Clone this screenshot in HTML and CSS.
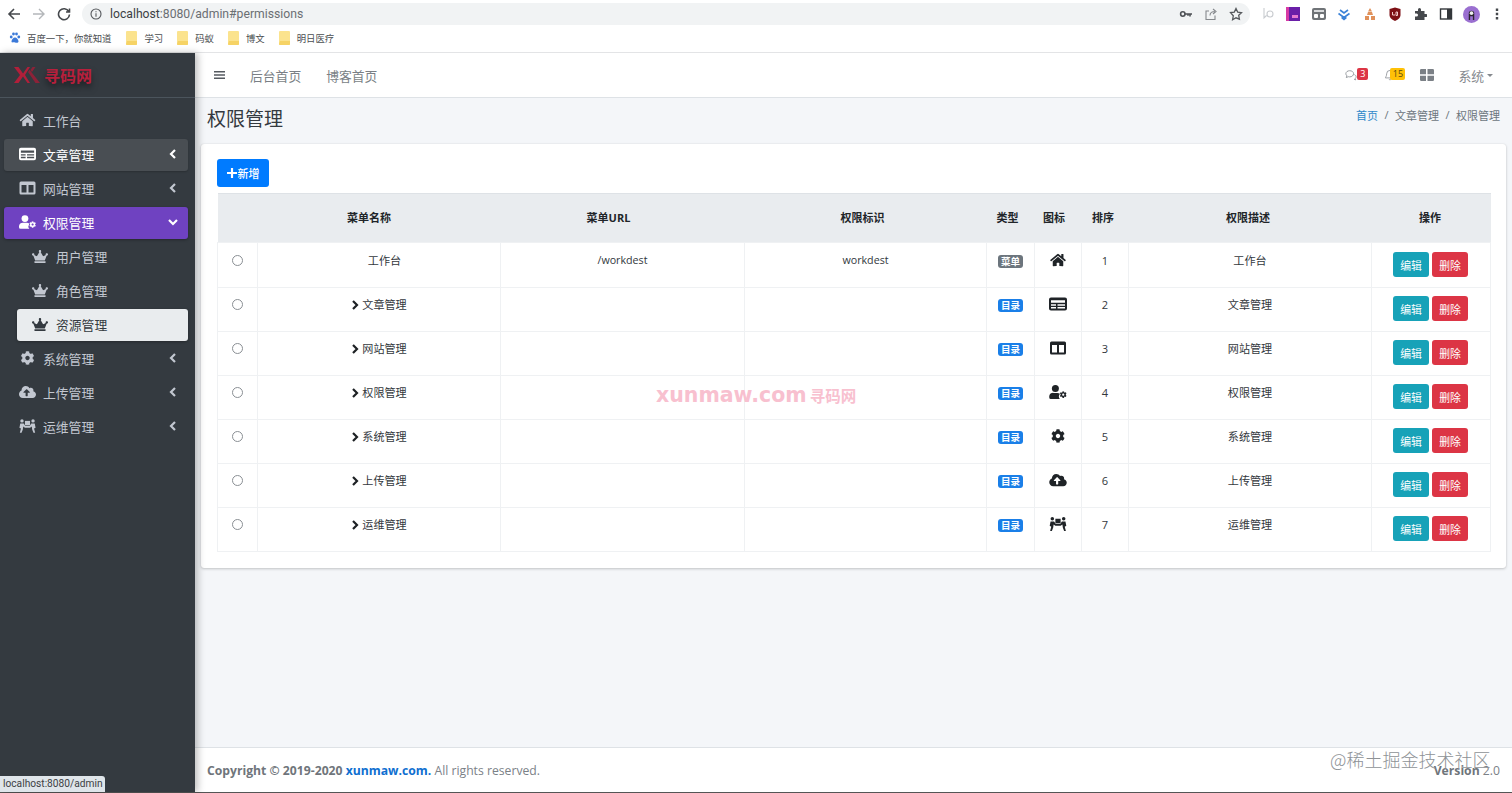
FILE: index.html
```html
<!DOCTYPE html>
<html lang="zh-CN">
<head>
<meta charset="utf-8">
<title>权限管理</title>
<link rel="stylesheet" href="styles.css">
</head>
<body>
<svg class="defs" aria-hidden="true">
  <symbol id="i-home" viewBox="0 0 576 512"><path d="M280.37 148.26L96 300.11V464a16 16 0 0 0 16 16l112.06-.29a16 16 0 0 0 15.92-16V368a16 16 0 0 1 16-16h64a16 16 0 0 1 16 16v95.64a16 16 0 0 0 16 16.05L464 480a16 16 0 0 0 16-16V300L295.67 148.26a12.19 12.19 0 0 0-15.3 0zM571.6 251.47L488 182.56V44.05a12 12 0 0 0-12-12h-56a12 12 0 0 0-12 12v72.61L318.47 43a48 48 0 0 0-61 0L4.34 251.47a12 12 0 0 0-1.6 16.9l25.5 31A12 12 0 0 0 45.15 301l235.22-193.74a12.19 12.19 0 0 1 15.3 0L530.9 301a12 12 0 0 0 16.9-1.6l25.5-31a12 12 0 0 0-1.7-16.93z"/></symbol>
  <symbol id="i-cog" viewBox="0 0 512 512"><path d="M487.4 315.7l-42.6-24.6c4.3-23.2 4.3-47 0-70.2l42.6-24.6c4.9-2.8 7.1-8.6 5.5-14-11.1-35.6-30-67.8-54.7-94.6-3.8-4.1-10-5.1-14.8-2.3L380.8 110c-17.9-15.4-38.5-27.3-60.8-35.1V25.8c0-5.6-3.9-10.5-9.4-11.7-36.7-8.2-74.3-7.8-109.2 0-5.5 1.2-9.4 6.1-9.4 11.7V75c-22.2 7.9-42.8 19.8-60.8 35.1L88.7 85.5c-4.9-2.8-11-1.9-14.8 2.3-24.7 26.7-43.6 58.9-54.7 94.6-1.7 5.4.6 11.2 5.5 14L67.3 221c-4.3 23.2-4.3 47 0 70.2l-42.6 24.6c-4.9 2.8-7.1 8.6-5.5 14 11.1 35.6 30 67.8 54.7 94.6 3.8 4.1 10 5.1 14.8 2.3l42.6-24.6c17.9 15.4 38.5 27.3 60.8 35.1v49.2c0 5.6 3.9 10.5 9.4 11.7 36.7 8.2 74.3 7.8 109.2 0 5.5-1.2 9.4-6.1 9.4-11.7v-49.2c22.2-7.9 42.8-19.8 60.8-35.1l42.6 24.6c4.9 2.8 11 1.9 14.8-2.3 24.7-26.7 43.6-58.9 54.7-94.6 1.5-5.5-.7-11.3-5.6-14.1zM256 336c-44.1 0-80-35.9-80-80s35.9-80 80-80 80 35.9 80 80-35.9 80-80 80z"/></symbol>
  <symbol id="i-crown" viewBox="0 0 640 512"><path d="M528 448H112c-8.8 0-16 7.2-16 16v32c0 8.8 7.2 16 16 16h416c8.8 0 16-7.2 16-16v-32c0-8.8-7.2-16-16-16zm64-320c-26.5 0-48 21.5-48 48 0 7.1 1.6 13.7 4.4 19.8L476 239.2c-15.4 9.2-35.3 4-44.2-11.6L350.3 85C361 76.2 368 63 368 48c0-26.5-21.5-48-48-48s-48 21.5-48 48c0 15 7 28.2 17.7 37l-81.5 142.6c-8.9 15.6-28.9 20.8-44.2 11.6l-72.3-43.4c2.7-6 4.4-12.7 4.4-19.8 0-26.5-21.5-48-48-48S0 149.5 0 176s21.5 48 48 48c2.6 0 5.2-.4 7.7-.8L128 416h384l72.3-192.8c2.5.4 5.1.8 7.7.8 26.5 0 48-21.5 48-48s-21.5-48-48-48z"/></symbol>
  <symbol id="i-cloud" viewBox="0 0 640 512"><path d="M537.6 226.6c4.1-10.7 6.4-22.4 6.4-34.6 0-53-43-96-96-96-19.7 0-38.1 6-53.3 16.2C367 64.2 315.3 32 256 32c-88.4 0-160 71.6-160 160 0 2.7.1 5.4.2 8.1C40.2 219.8 0 273.2 0 336c0 79.5 64.5 144 144 144h368c70.7 0 128-57.3 128-128 0-61.9-44-113.6-102.4-125.4zM393.4 288H328v112c0 8.8-7.2 16-16 16h-48c-8.8 0-16-7.2-16-16V288h-65.4c-14.3 0-21.4-17.2-11.3-27.3l105.4-105.4c6.2-6.2 16.4-6.2 22.6 0l105.4 105.4c10.1 10.1 3 27.3-11.3 27.3z"/></symbol>
  <symbol id="i-article" viewBox="0 0 18 14"><path fill-rule="evenodd" d="M2 0.5h14a2 2 0 0 1 2 2v9a2 2 0 0 1-2 2H2a2 2 0 0 1-2-2v-9a2 2 0 0 1 2-2zM2 3.2v2.600h14V3.200zM2 7.300v1.400h5V7.300zM8.500 7.300v1.400H16V7.300zM2 10v1.500h5V10zM8.500 10v1.500H16V10z"/></symbol>
  <symbol id="i-columns" viewBox="0 0 16 14"><path fill-rule="evenodd" d="M1.500 0.500h13A1.500 1.500 0 0 1 16 2v10a1.500 1.500 0 0 1-1.500 1.500h-13A1.500 1.500 0 0 1 0 12V2A1.500 1.500 0 0 1 1.500 0.500zM2 4v7.500h5V4zM9 4v7.500h5V4z"/></symbol>
  <symbol id="i-usercog" viewBox="0 0 20 16"><circle cx="7" cy="4" r="4"/><path d="M0 14.200v-1.500A4.700 4.700 0 0 1 4.700 9h4.600c1 0 1.900.3 2.600.8v.7a4.500 4.500 0 0 0 .3 5.500H1.800A1.800 1.800 0 0 1 0 14.200z"/><use href="#i-cog" x="12" y="7" width="8" height="8"/></symbol>
  <symbol id="i-people" viewBox="0 0 20 16"><circle cx="3.500" cy="2" r="2"/><circle cx="16.500" cy="2" r="2"/><rect x="7" y="2" width="6" height="5"/><path d="M1.500 5h4L7.300 7.600h5.400L14.500 5h4l1 5-1.800 1 1.300 5h-2l-1.500-4-.5-3.500-2 1.500H7l-2-1.500-.5 3.500L3 16H1l1.300-5L.5 10z"/></symbol>
  <symbol id="i-list" viewBox="0 0 14 12"><path d="M0 1h14v1.800H0zM0 5.100h14v1.800H0zM0 9.200h14V11H0z"/></symbol>
  <symbol id="i-th" viewBox="0 0 14 12"><path d="M0 1.200A1.200 1.200 0 0 1 1.200 0H6v5.300H0zM7.500 0h5.300A1.200 1.200 0 0 1 14 1.200v4.100H7.500zM0 6.700h6V12H1.200A1.200 1.200 0 0 1 0 10.800zM7.500 6.700H14v4.100a1.200 1.200 0 0 1-1.200 1.200H7.500z"/></symbol>
  <symbol id="i-plus" viewBox="0 0 12 12"><path d="M4.700 0h2.600v4.700H12v2.600H7.300V12H4.700V7.300H0V4.700h4.700z"/></symbol>
  <symbol id="i-folder" viewBox="0 0 11 14"><path d="M1 0h9a1 1 0 0 1 1 1v12a1 1 0 0 1-1 1H1a1 1 0 0 1-1-1V1a1 1 0 0 1 1-1z" fill="#fbe38e"/><path d="M1 10h10v3a1 1 0 0 1-1 1H1a1 1 0 0 1-1-1z" fill="#f6d365"/></symbol>
</svg>

<header class="browser">
  <div class="toolbar">
    <div class="nav-btns">
      <svg class="tb-icon" viewBox="0 0 14 14"><path class="st-dark" d="M13 7H2M7 2L2 7l5 5"/></svg>
      <svg class="tb-icon" viewBox="0 0 14 14"><path class="st-light" d="M1 7h11M7 2l5 5-5 5"/></svg>
      <svg class="tb-icon" viewBox="0 0 14 14"><path class="st-dark" d="M11.800 4.500A5.500 5.500 0 1 0 12.500 7.500M12.500 1.500v3.500H9"/></svg>
    </div>
    <div class="address">
      <svg class="info" viewBox="0 0 12 12"><circle class="st-thin" cx="6" cy="6" r="5"/><path class="st-thin" d="M6 5.300v3.500M6 3.200v1"/></svg>
      <span class="url"><span class="host">localhost</span>:8080/admin#permissions</span>
      <div class="addr-actions">
        <svg class="tb-icon" viewBox="0 0 14 14"><circle class="st-key" cx="3.800" cy="7" r="2.200"/><path class="st-key" d="M6 7h7M11 7v2.500M9 7v1.800"/></svg>
        <svg class="tb-icon" viewBox="0 0 14 14"><path class="st-gray" d="M11 8.500V12.500H2V4h3M6 8.500C6 5.500 8 4.500 11 4.500M9 2l3 2.500L9 7"/></svg>
        <svg class="tb-icon" viewBox="0 0 14 14"><path class="st-star" d="M7 1.500l1.700 3.600 3.800.5-2.800 2.700.7 3.900L7 10.800l-3.400 1.900.7-3.900L1.500 5.600l3.800-.5z"/></svg>
      </div>
    </div>
    <div class="extensions">
      <svg class="ext" viewBox="0 0 14 14"><path class="st-pale" d="M3 1v10l2.500-2.500M6 7a3 3 0 1 0 6 0 3 3 0 1 0-6 0"/></svg>
      <svg class="ext" viewBox="0 0 14 14"><rect width="14" height="14" fill="#6a1fa8"/><rect width="3" height="14" fill="#d63aa5"/><rect x="6" y="8" width="6" height="3" fill="#e77ad0"/></svg>
      <svg class="ext" viewBox="0 0 14 14"><rect y="1" width="14" height="12" rx="2" fill="#6f7377"/><rect x="2" y="7" width="4" height="4" rx="1" fill="#fff"/><rect x="8" y="7" width="4" height="4" rx="1" fill="#fff"/><rect x="2" y="3" width="10" height="2" fill="#d8dadc"/></svg>
      <svg class="ext" viewBox="0 0 14 14"><path class="st-blue" d="M3 3l4 3 4-3M1.500 6.500L7 10.500l5.500-4M4.500 10.500L7 12.500l2.500-2"/></svg>
      <svg class="ext" viewBox="0 0 14 14"><path d="M7 1l2 3.500H5zM5 5h4l1 3H4zM2 9h4v4H2zM8 9h4v4H8z" fill="#e0915a"/></svg>
      <svg class="ext" viewBox="0 0 14 14"><path d="M1.500 2L7 .5 12.500 2v6C12.500 11 9.500 13 7 14 4.500 13 1.500 11 1.500 8z" fill="#7d0f14"/><path d="M4.500 5v3h2.500M8 5v3.500M8 5h1.500v3.500H8" stroke="#f2c9c9" fill="none"/></svg>
      <svg class="ext" viewBox="0 0 14 14"><path d="M5 2.500a1.500 1.500 0 0 1 3 0V4h3.500v3H13a1.500 1.500 0 0 1 0 3h-1.500v3H2v-3.500h1.500a1.500 1.500 0 0 0 0-3H2V4h3z" fill="#45484c"/></svg>
      <svg class="ext" viewBox="0 0 14 14"><rect class="st-panel" x="1.500" y="2" width="11" height="10"/><rect x="8" y="2" width="4.500" height="10" fill="#33373a"/></svg>
      <div class="avatar"><svg class="avatar-art" viewBox="0 0 12 12"><path d="M3 12V5a3 3 0 0 1 6 0v7H7.500V8h-3v4z" fill="#2b2430"/><circle cx="6" cy="4.500" r="2" fill="#eee"/></svg></div>
      <svg class="ext" viewBox="0 0 14 14"><path d="M5.800 1.500h2.400v2.400H5.800zM5.800 5.800h2.400v2.400H5.800zM5.800 10.100h2.400v2.400H5.800z" fill="#44484c"/></svg>
    </div>
  </div>
  <div class="bookmarks">
    <a class="bm bm-first"><svg class="paw" viewBox="0 0 12 12"><circle cx="2.200" cy="5" r="1.400"/><circle cx="9.800" cy="5" r="1.400"/><circle cx="4.500" cy="2" r="1.400"/><circle cx="7.500" cy="2" r="1.400"/><path d="M6 5.500c1.500 0 3.500 2 3.500 4 0 1.500-2 1.500-3.500 1s-3.500 .5-3.500-1c0-2 2-4 3.500-4z"/></svg>百度一下，你就知道</a>
    <a class="bm"><svg class="folder"><use href="#i-folder"/></svg>学习</a>
    <a class="bm"><svg class="folder"><use href="#i-folder"/></svg>码蚁</a>
    <a class="bm"><svg class="folder"><use href="#i-folder"/></svg>博文</a>
    <a class="bm"><svg class="folder"><use href="#i-folder"/></svg>明日医疗</a>
  </div>
</header>

<div class="app">
  <aside class="sidebar">
    <div class="brand">
      <svg class="brand-mark" viewBox="0 0 26 18"><path d="M0 1h4.500L9 7.500 13.500 1H16l-5 8 5 8h-2.500L9 10.500 4.500 17H0l6-8z" fill="#b11f3a"/><path d="M26 1h-4.500L18 6l-1.500-2L18.500 1zM26 17h-4.500L14 6l1.500-2.200z" fill="#8c2238"/></svg>
      <span class="brand-name">寻码网</span>
    </div>
    <nav class="menu">
      <a class="item"><svg class="m-ic"><use href="#i-home"/></svg><span>工作台</span></a>
      <a class="item hover"><svg class="m-ic"><use href="#i-article"/></svg><span>文章管理</span><svg class="chev" viewBox="0 0 8 10"><path d="M6 1L2 5l4 4"/></svg></a>
      <a class="item"><svg class="m-ic"><use href="#i-columns"/></svg><span>网站管理</span><svg class="chev" viewBox="0 0 8 10"><path d="M6 1L2 5l4 4"/></svg></a>
      <a class="item open"><svg class="m-ic"><use href="#i-usercog"/></svg><span>权限管理</span><svg class="chev" viewBox="0 0 10 8"><path d="M1 2l4 4 4-4"/></svg></a>
      <a class="item sub"><svg class="m-ic crown"><use href="#i-crown"/></svg><span>用户管理</span></a>
      <a class="item sub"><svg class="m-ic crown"><use href="#i-crown"/></svg><span>角色管理</span></a>
      <a class="item sub current"><svg class="m-ic crown"><use href="#i-crown"/></svg><span>资源管理</span></a>
      <a class="item"><svg class="m-ic"><use href="#i-cog"/></svg><span>系统管理</span><svg class="chev" viewBox="0 0 8 10"><path d="M6 1L2 5l4 4"/></svg></a>
      <a class="item"><svg class="m-ic"><use href="#i-cloud"/></svg><span>上传管理</span><svg class="chev" viewBox="0 0 8 10"><path d="M6 1L2 5l4 4"/></svg></a>
      <a class="item"><svg class="m-ic"><use href="#i-people"/></svg><span>运维管理</span><svg class="chev" viewBox="0 0 8 10"><path d="M6 1L2 5l4 4"/></svg></a>
    </nav>
  </aside>

  <main class="main">
    <div class="navbar">
      <svg class="burger"><use href="#i-list"/></svg>
      <a class="nav-link">后台首页</a>
      <a class="nav-link">博客首页</a>
      <div class="nav-right">
        <span class="nav-ic"><svg class="outline" viewBox="0 0 14 12"><path d="M5.500 1C3 1 1 2.500 1 4.500c0 1 .5 1.800 1.200 2.400L1.500 9l2.300-1c.5.100 1.100.2 1.700.2 2.500 0 4.500-1.600 4.500-3.700S8 1 5.500 1zM11 5.500c1.200.5 2 1.500 2 2.700 0 .8-.4 1.500-1 2l.5 1.500-2-.8"/></svg><b class="count red">3</b></span>
        <span class="nav-ic bell"><svg class="outline" viewBox="0 0 12 13"><path d="M6 1a4 4 0 0 0-4 4c0 3-1.500 4-1.500 5h11C11.500 9 10 8 10 5a4 4 0 0 0-4-4zM4.800 11.500a1.300 1.300 0 0 0 2.400 0"/></svg><b class="count yellow">15</b></span>
        <svg class="th"><use href="#i-th"/></svg>
        <a class="sys">系统<i class="caret"></i></a>
      </div>
    </div>

    <div class="page-head">
      <h1>权限管理</h1>
      <ol class="crumbs">
        <li class="link">首页</li><li class="sep">/</li><li>文章管理</li><li class="sep">/</li><li>权限管理</li>
      </ol>
    </div>

    <section class="card">
      <button class="add"><svg class="plus"><use href="#i-plus"/></svg>新增</button>
      <table class="grid">
        <colgroup>
          <col class="c1"><col class="c2"><col class="c3"><col class="c4"><col class="c5"><col class="c6"><col class="c7"><col class="c8"><col class="c9">
        </colgroup>
        <thead>
          <tr><th></th><th>菜单名称</th><th>菜单URL</th><th>权限标识</th><th>类型</th><th>图标</th><th>排序</th><th>权限描述</th><th>操作</th></tr>
        </thead>
        <tbody>
          <tr>
            <td><i class="radio"></i></td><td class="leaf">工作台</td><td class="latin">/workdest</td><td class="latin">workdest</td>
            <td><span class="tag gray">菜单</span></td><td><svg class="t-ic"><use href="#i-home"/></svg></td><td>1</td><td>工作台</td>
            <td><button class="btn teal">编辑</button><button class="btn rose">删除</button></td>
          </tr>
          <tr>
            <td><i class="radio"></i></td><td><svg class="arrow" viewBox="0 0 8 10"><path d="M2 1l4 4-4 4"/></svg>文章管理</td><td></td><td></td>
            <td><span class="tag blue">目录</span></td><td><svg class="t-ic"><use href="#i-article"/></svg></td><td>2</td><td>文章管理</td>
            <td><button class="btn teal">编辑</button><button class="btn rose">删除</button></td>
          </tr>
          <tr>
            <td><i class="radio"></i></td><td><svg class="arrow" viewBox="0 0 8 10"><path d="M2 1l4 4-4 4"/></svg>网站管理</td><td></td><td></td>
            <td><span class="tag blue">目录</span></td><td><svg class="t-ic"><use href="#i-columns"/></svg></td><td>3</td><td>网站管理</td>
            <td><button class="btn teal">编辑</button><button class="btn rose">删除</button></td>
          </tr>
          <tr>
            <td><i class="radio"></i></td><td><svg class="arrow" viewBox="0 0 8 10"><path d="M2 1l4 4-4 4"/></svg>权限管理</td><td></td><td></td>
            <td><span class="tag blue">目录</span></td><td><svg class="t-ic"><use href="#i-usercog"/></svg></td><td>4</td><td>权限管理</td>
            <td><button class="btn teal">编辑</button><button class="btn rose">删除</button></td>
          </tr>
          <tr>
            <td><i class="radio"></i></td><td><svg class="arrow" viewBox="0 0 8 10"><path d="M2 1l4 4-4 4"/></svg>系统管理</td><td></td><td></td>
            <td><span class="tag blue">目录</span></td><td><svg class="t-ic"><use href="#i-cog"/></svg></td><td>5</td><td>系统管理</td>
            <td><button class="btn teal">编辑</button><button class="btn rose">删除</button></td>
          </tr>
          <tr>
            <td><i class="radio"></i></td><td><svg class="arrow" viewBox="0 0 8 10"><path d="M2 1l4 4-4 4"/></svg>上传管理</td><td></td><td></td>
            <td><span class="tag blue">目录</span></td><td><svg class="t-ic"><use href="#i-cloud"/></svg></td><td>6</td><td>上传管理</td>
            <td><button class="btn teal">编辑</button><button class="btn rose">删除</button></td>
          </tr>
          <tr>
            <td><i class="radio"></i></td><td><svg class="arrow" viewBox="0 0 8 10"><path d="M2 1l4 4-4 4"/></svg>运维管理</td><td></td><td></td>
            <td><span class="tag blue">目录</span></td><td><svg class="t-ic"><use href="#i-people"/></svg></td><td>7</td><td>运维管理</td>
            <td><button class="btn teal">编辑</button><button class="btn rose">删除</button></td>
          </tr>
        </tbody>
      </table>
    </section>

    <footer class="footer">
      <div><strong>Copyright © 2019-2020 <a class="flink">xunmaw.com.</a></strong> All rights reserved.</div>
      <div><strong>Version</strong> 2.0</div>
    </footer>
  </main>
</div>

<div class="mark-site">xunmaw.com <span class="mark-cn">寻码网</span></div>
<div class="mark-juejin">@稀土掘金技术社区</div>
<div class="status">localhost:8080/admin</div>
</body>
</html>
```

FILE: styles.css
```css
* { box-sizing: border-box; }
html, body { margin: 0; height: 793px; overflow: hidden; }
body {
  display: flex;
  flex-direction: column;
  position: relative;
  font-family: "Open Sans", "Noto Sans CJK SC", sans-serif;
  color: #212529;
  background: #fff;
}
.defs { position: absolute; width: 0; height: 0; }
svg { display: block; fill: currentColor; }

/* browser chrome */
.browser { height: 53px; flex: none; background: #fff; border-bottom: 1px solid #e3e4e6; }
.toolbar { height: 27px; display: flex; align-items: center; padding-top: 1px; }
.nav-btns { display: flex; gap: 11px; padding-left: 7px; width: 82px; }
.tb-icon { width: 14px; height: 14px; fill: none; }
.st-dark { fill: none; stroke: #45484c; stroke-width: 1.6; }
.st-light { fill: none; stroke: #b4b7ba; stroke-width: 1.4; }
.st-thin { fill: none; stroke: #55585c; stroke-width: 1.1; }
.st-key { fill: none; stroke: #4d5054; stroke-width: 1.6; }
.st-gray { fill: none; stroke: #85888c; stroke-width: 1.1; }
.st-star { fill: none; stroke: #55585c; stroke-width: 1.3; }
.st-pale { fill: none; stroke: #c9ccd0; stroke-width: 1.1; }
.st-blue { fill: none; stroke: #3b82d8; stroke-width: 1.6; }
.st-panel { fill: none; stroke: #33373a; stroke-width: 1.4; }
.address {
  width: 1168px;
  height: 22px;
  display: flex;
  align-items: center;
  background: #f1f3f4;
  border-radius: 11px;
  padding-left: 8px;
}
.info { width: 12px; height: 12px; margin-right: 8px; fill: none; }
.url { font-family: Roboto, sans-serif; font-size: 12.2px; color: #6b6f73; }
.host { color: #3c4043; }
.addr-actions { margin-left: auto; display: flex; gap: 11px; padding-right: 7px; }
.extensions { flex: 1; display: flex; align-items: center; gap: 11.4px; padding-left: 11px; }
.ext { width: 14px; height: 14px; fill: none; flex: none; }
.avatar { width: 17px; height: 17px; border-radius: 50%; background: #9a6fd0; display: flex; align-items: center; justify-content: center; flex: none; margin: 0 -1.5px; }
.avatar-art { width: 11px; height: 11px; }
.bookmarks { height: 25px; padding-bottom: 3px; display: flex; align-items: center; font-size: 9.4px; color: #4a4d50; }
.bm { display: flex; align-items: center; gap: 7px; margin-left: 14px; }
.bm-first { margin-left: 9px; gap: 6px; margin-right: 1px; }
.paw { width: 12px; height: 12px; fill: #3b79d8; }
.folder { width: 11px; height: 14px; }

/* app layout */
.app { flex: 1; min-height: 0; display: flex; border-bottom: 1px solid #555; }
.sidebar { width: 195px; flex: none; background: #343a40; box-shadow: 3px 0 7px rgba(0,0,0,.25); position: relative; z-index: 2; }
.brand { height: 45px; display: flex; align-items: center; padding-left: 14px; gap: 4px; border-bottom: 1px solid #4b545c; }
.brand-mark { width: 26px; height: 18px; }
.brand-name { font-size: 16px; font-weight: 700; color: #b71f3c; text-shadow: 0 4px 6px rgba(0,0,0,.5); }
.menu { padding: 7px 7px 0 4px; display: flex; flex-direction: column; gap: 2px; }
.item {
  height: 32px;
  display: flex;
  align-items: center;
  padding: 0 0 2px 15px;
  font-size: 12.8px;
  color: #c2c7d0;
  border-radius: 3px;
}
.item span { flex: 1; }
.m-ic { width: 17px; height: 14px; margin-right: 7px; flex: none; }
.chev { width: 8px; height: 10px; fill: none; stroke: currentColor; stroke-width: 2.2; margin-right: 11px; flex: none; }
.open .chev { width: 10px; height: 8px; margin-right: 10px; }
.hover { background: #494e53; color: #fff; box-shadow: 0 1px 2px rgba(0,0,0,.2); }
.open { background: #6f42c1; color: #fff; box-shadow: 0 1px 3px rgba(0,0,0,.3); }
.sub { margin-left: 13px; padding-left: 15px; }
.crown { width: 16px; height: 13px; margin-right: 8px; }
.current { background: #e9ecee; color: #343a40; box-shadow: 0 1px 3px rgba(0,0,0,.3); }

.main { flex: 1; min-width: 0; display: flex; flex-direction: column; background: #f4f6f9; }
.navbar { height: 45px; flex: none; background: #fff; border-bottom: 1px solid #dee2e6; display: flex; align-items: center; padding: 0 19px; color: #6c7278; font-size: 12.8px; }
.burger { width: 11px; height: 10px; margin-right: 25px; color: #555a60; }
.nav-link { margin-right: 25px; color: #7a7f85; }
.nav-right { margin-left: auto; display: flex; align-items: center; }
.nav-ic { position: relative; display: block; }
.outline { width: 12px; height: 12px; fill: none; stroke: #8a8f94; stroke-width: 1; margin-right: 28px; }
.bell .outline { width: 10px; margin-right: 25px; }
.count { position: absolute; top: -1px; height: 12px; min-width: 11px; padding: 0 2px; border-radius: 2px; font-size: 9px; font-weight: 400; line-height: 12px; text-align: center; }
.red { left: 12px; background: #dc3545; color: #fff; }
.yellow { left: 5px; width: 15px; background: #ffc107; color: #5a4a10; }
.th { width: 14px; height: 12px; color: #7b8086; margin-right: 24px; }
.sys { display: flex; align-items: center; color: #85898e; }
.caret { width: 0; height: 0; border: 3px solid transparent; border-top: 3px solid #85898e; border-bottom: 0; margin-left: 3px; }

.page-head { height: 46px; flex: none; display: flex; justify-content: space-between; align-items: center; padding: 0 12px 6px 12px; }
h1 { margin: 0; font-size: 19px; font-weight: 400; color: #343a40; }
.crumbs { list-style: none; margin: 0 0 6px; padding: 0; display: flex; font-size: 11px; color: #6c757d; }
.link { color: #2f88c9; }
.sep { margin: 0 6.5px; }

.card { margin: 0 6px; height: 424px; flex: none; background: #fff; border-radius: 3px; box-shadow: 0 0 1px rgba(0,0,0,.125), 0 1px 3px rgba(0,0,0,.2); padding: 15px 16px 0; }
.add { display: flex; align-items: center; justify-content: center; gap: 1px; width: 52px; height: 28px; border: 0; padding: 0; border-radius: 3px; background: #007bff; color: #fff; font: 500 11px "Open Sans", "Noto Sans CJK SC", sans-serif; margin-bottom: 6px; }
.plus { width: 10px; height: 10px; }

.grid { width: 1273px; table-layout: fixed; border-collapse: collapse; font-size: 11.1px; text-align: center; color: #33383d; }
.c1 { width: 40px; } .c2 { width: 243px; } .c3 { width: 244px; } .c4 { width: 242px; }
.c5 { width: 48px; } .c6 { width: 47px; } .c7 { width: 47px; } .c8 { width: 243px; } .c9 { width: 119px; }
th { height: 49px; background: #e9ecef; border-top: 1px solid #dee2e6; font-weight: 700; color: #212529; padding: 0 0 3px; font-size: 11px; }
th:nth-child(2) { padding-right: 20px; }
th:nth-child(3) { padding-right: 28px; }
th:nth-child(4) { padding-right: 6px; }
th:nth-child(5) { padding-right: 6px; }
th:nth-child(6) { padding-right: 8px; }
th:nth-child(7) { padding-right: 4px; }
th:nth-child(8) { padding-right: 4px; }
th:nth-child(9) { padding-right: 2px; }
td { height: 44px; padding: 8px 0 0; vertical-align: top; border: 1px solid #eff1f3; line-height: 17px; }
tbody tr:first-child td { height: 45px; padding-top: 9px; }
.leaf { padding-left: 11px; }
.latin { font-size: 10.7px; }
.radio { display: block; width: 11px; height: 11px; margin: 3px auto 0; border: 1px solid #8a8f94; border-radius: 50%; background: #fff; }
.arrow { display: inline-block; width: 8px; height: 10px; fill: none; stroke: #1d2124; stroke-width: 2.2; margin-right: 3px; vertical-align: -1px; }
.tag { display: inline-block; width: 25px; height: 13px; border-radius: 3px; color: #fff; font-size: 9.5px; font-weight: 700; line-height: 13px; vertical-align: middle; margin-top: -1px; }
.gray { background: #6c757d; }
.blue { background: #1a7fe8; }
.t-ic { width: 18px; height: 14px; margin: 1px auto 0; color: #1f2327; }
.btn { width: 36px; height: 25px; border: 0; padding: 0; border-radius: 3px; color: #fff; font: 400 10.8px "Noto Sans CJK SC", sans-serif; vertical-align: top; }
.teal { background: #17a2b8; margin: 0 3px 0 -1px; }
.rose { background: #dc3545; }

.footer { margin-top: auto; height: 45px; flex: none; background: #fff; border-top: 1px solid #dee2e6; display: flex; justify-content: space-between; align-items: center; padding: 0 12px; font-size: 12.2px; color: #7b8187; }
.flink { color: #0f6fd0; }
strong { font-weight: 700; color: #6f757b; }

/* overlays */
.mark-site { position: absolute; left: 656px; top: 383px; font-family: "DejaVu Sans", "Noto Sans CJK SC", sans-serif; font-size: 20.5px; font-weight: 700; color: #f8c0cf; white-space: nowrap; z-index: 5; }
.mark-cn { font-family: "Noto Sans CJK SC", sans-serif; font-size: 15.5px; margin-left: -4px; }
.mark-juejin { position: absolute; left: 1330px; top: 746px; font-family: "Noto Sans CJK SC", sans-serif; font-size: 18px; font-weight: 300; color: #8e9296; white-space: nowrap; z-index: 5; }
.status { position: absolute; left: 0; bottom: 1px; width: 105px; height: 16px; padding-left: 3px; background: #dfe5ea; border-radius: 0 3px 0 0; font-family: Roboto, sans-serif; font-size: 10.2px; line-height: 16px; color: #3c4043; white-space: nowrap; z-index: 6; }
```
